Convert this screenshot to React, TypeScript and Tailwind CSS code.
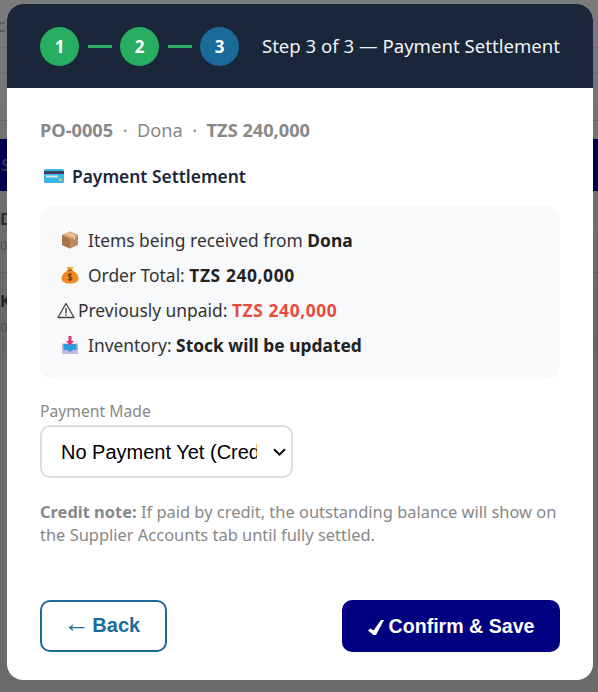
import React from 'react'

const CardIcon = () => (
  <svg width="20" height="14" viewBox="0 0 20 14" className="shrink-0">
    <rect x="0" y="0" width="20" height="14" rx="1.5" fill="#38b6e8" />
    <rect x="0" y="2" width="20" height="3" fill="#3d3f5c" />
    <rect x="2" y="6.5" width="12" height="2" fill="#d7e6ee" />
    <rect x="15" y="9.5" width="3" height="2.5" fill="#f5c542" />
  </svg>
)

const BoxIcon = () => (
  <svg width="20" height="20" viewBox="0 0 20 20" className="shrink-0">
    <path d="M10 1.5 18 5v10l-8 3.5L2 15V5z" fill="#c08a5c" />
    <path d="M10 1.5 18 5l-8 3.5L2 5z" fill="#dcae82" />
    <path d="M10 8.5v10L2 15V5z" fill="#a9764b" />
    <path d="M5.5 3.2 13.5 6.8v3l1.5-.7V6L7 2.5z" fill="#efd2b0" />
  </svg>
)

const BagIcon = () => (
  <svg width="20" height="20" viewBox="0 0 20 20" className="shrink-0">
    <path d="M6.5 1.5c1.2.8 2 .8 3.5.3 1.5.5 2.3.5 3.5-.3L12 5.5H8z" fill="#f0a32f" />
    <path d="M8 5.2c-4 1.8-6.5 5.3-6.5 8.3 0 3.5 3.5 5 8.5 5s8.500-1.500 8.500-5c0-3-2.500-6.500-6.500-8.300z" fill="#f28a1e" />
    <rect x="7.800" y="4.600" width="4.400" height="1.300" rx=".6" fill="#8a5a1c" />
    <path d="M12 9.500c-1.600-.9-3.700-.5-3.700 1 0 2 3.700 1 3.700 3 0 1.500-2.200 1.800-3.900.9M10 8v8" stroke="#6e3d0c" strokeWidth="1.200" fill="none" />
  </svg>
)

const InboxIcon = () => (
  <svg width="20" height="20" viewBox="0 0 20 20" className="shrink-0">
    <path d="M2 8.500h16V18a1 1 0 0 1-1 1H3a1 1 0 0 1-1-1z" fill="#c5b8e0" />
    <path d="M3.500 9h13v6h-4l-1 1.500h-3L7.500 15h-4z" fill="#2f9be0" />
    <path d="M8.500 1h3v5H14l-4 4.500L6 6h2.500z" fill="#e8336b" />
  </svg>
)

const WarnIcon = () => (
  <svg width="18" height="17" viewBox="0 0 18 17" className="shrink-0">
    <path d="M9 1.500 17 15.500H1z" fill="none" stroke="#444" strokeWidth="1.300" strokeLinejoin="round" />
    <path d="M9 6v5.500M9 12.500v1.300" stroke="#444" strokeWidth="1.500" />
  </svg>
)

const CheckIcon = () => (
  <svg width="17" height="17" viewBox="0 0 17 17" className="shrink-0">
    <path d="M0 11.500 2.500 9.500 5.500 11.500 13 1h3L8 16H5.500z" fill="#fff" />
  </svg>
)

function Step({ n, color }: { n: number; color: string }) {
  return (
    <div className={`flex h-[39px] w-[39px] items-center justify-center rounded-full pt-[1px] text-[17px] font-bold text-white ${color}`}>
      {n}
    </div>
  )
}

export default function App() {
  return (
    <div className="relative h-[692px] w-[598px] overflow-hidden bg-[#6a6a6c] font-['Noto_Sans',sans-serif]">
      {/* page behind the overlay */}
      <div className="flex flex-col bg-gradient-to-b from-[#7b7b7b] to-[#656668]">
        <div className="h-[48px] border-b border-[#6f6f6f] pt-[14px] text-[18px] leading-[22px] text-[#555]">
          <span className="ml-[-3px]">co</span>
        </div>
        <div className="h-[25px] border-b border-[#6f6f6f]" />
        <div className="h-[48px] border-b border-[#656565]" />
        <div className="h-[18px]" />
        <div className="flex h-[52px] items-center bg-[#000050] text-[16px] font-bold text-[#33335f]">
          <span className="ml-[1px]">S</span>
        </div>
        <div className="h-[82px] border-b border-[#616161] pt-[18px] text-[16px] font-bold leading-[20px] text-[#2f2a22]">
          D
          <div className="mt-[6px] text-[13px] font-normal text-[#4f5052]">0</div>
        </div>
        <div className="h-[80px] pt-[18px] text-[16px] font-bold leading-[20px] text-[#222]">
          K
          <div className="mt-[6px] text-[13px] font-normal text-[#4f5052]">0</div>
        </div>
      </div>

      {/* modal */}
      <div className="absolute left-[7px] top-[4px] flex h-[676px] w-[586px] flex-col overflow-hidden rounded-[16px] bg-white">
        <div className="flex h-[84px] shrink-0 items-center justify-between bg-[#1a2639] pl-[33px] pr-[33px]">
          <div className="flex items-center gap-[8.5px]">
            <Step n={1} color="bg-[#27ae60]" />
            <div className="h-[3px] w-[24px] bg-[#27ae60]" />
            <Step n={2} color="bg-[#27ae60]" />
            <div className="h-[3px] w-[24px] bg-[#27ae60]" />
            <Step n={3} color="bg-[#1a6b9a]" />
          </div>
          <div className="text-[18.6px] font-normal text-[#f1f3f5]">Step 3 of 3 — Payment Settlement</div>
        </div>

        <div className="flex flex-1 flex-col px-[33px] pt-[30px]">
          <div className="text-[18.2px] leading-[24px] text-[#888]">
            <b className="font-bold">PO-0005</b>
            <span className="mx-[9.5px]">·</span>Dona<span className="mx-[9.5px]">·</span>
            <b className="font-bold">TZS 240,000</b>
          </div>

          <div className="mt-[22px] flex items-center gap-[8px] pl-[4px] text-[17.4px] font-semibold leading-[24px] text-[#1a2639]">
            <CardIcon />
            Payment Settlement
          </div>

          <div className="mt-[18px] flex h-[173px] flex-col justify-center gap-[11px] rounded-[12px] bg-[#f8f9fb] pl-[17px] text-[17.4px] leading-[24px] text-[#333]">
            <div className="flex items-center gap-[8px] pl-[3px]">
              <BoxIcon />
              <span>
                Items being received from <b className="font-bold text-[#222]">Dona</b>
              </span>
            </div>
            <div className="flex items-center gap-[8px] pl-[3px]">
              <BagIcon />
              <span>
                Order Total: <b className="font-bold tracking-[0.6px] text-[#222]">TZS 240,000</b>
              </span>
            </div>
            <div className="flex items-center gap-[3px]">
              <WarnIcon />
              <span>
                Previously unpaid: <b className="font-bold tracking-[0.6px] text-[#e74c3c]">TZS 240,000</b>
              </span>
            </div>
            <div className="flex items-center gap-[8px] pl-[3px]">
              <InboxIcon />
              <span>
                Inventory: <b className="font-bold text-[#222]">Stock will be updated</b>
              </span>
            </div>
          </div>

          <label className="mt-[22px] text-[15.7px] leading-[20px] text-[#888]">Payment Made</label>
          <div className="relative mt-[4px] w-[253px]">
            <select className="h-[53px] w-full appearance-none rounded-[10px] border-2 border-[#ddd] bg-white pl-[19px] pr-[34px] font-['Liberation_Sans',sans-serif] text-[20px] text-black">
              <option>No Payment Yet (Credit)</option>
            </select>
            <svg width="13" height="8" viewBox="0 0 13 8" className="pointer-events-none absolute left-[233px] top-[23px]">
              <path d="M1 1.200 6.500 6.500 12 1.200" fill="none" stroke="#111" strokeWidth="2" />
            </svg>
          </div>

          <p className="mt-[22px] text-[16.45px] leading-[23px] text-[#888]">
            <b className="font-bold">Credit note:</b> If paid by credit, the outstanding balance will show on the Supplier Accounts tab until fully settled.
          </p>

          <div className="mt-[54px] flex items-center justify-between font-['Liberation_Sans',sans-serif] text-[20px] font-bold">
            <button className="h-[52px] w-[127px] rounded-[10px] border-2 border-[#1a6b9a] bg-white pb-[3px] pr-[3px] text-[#1a6b9a]">
              <span className="mr-[-3px] text-[26px] leading-[20px] font-normal">←</span> Back
            </button>
            <button className="flex h-[52px] w-[218px] items-center justify-center gap-[4px] rounded-[10px] bg-[#000080] pt-[2px] text-[19.6px] text-white">
              <CheckIcon />
              Confirm &amp; Save
            </button>
          </div>
        </div>
      </div>
    </div>
  )
}
